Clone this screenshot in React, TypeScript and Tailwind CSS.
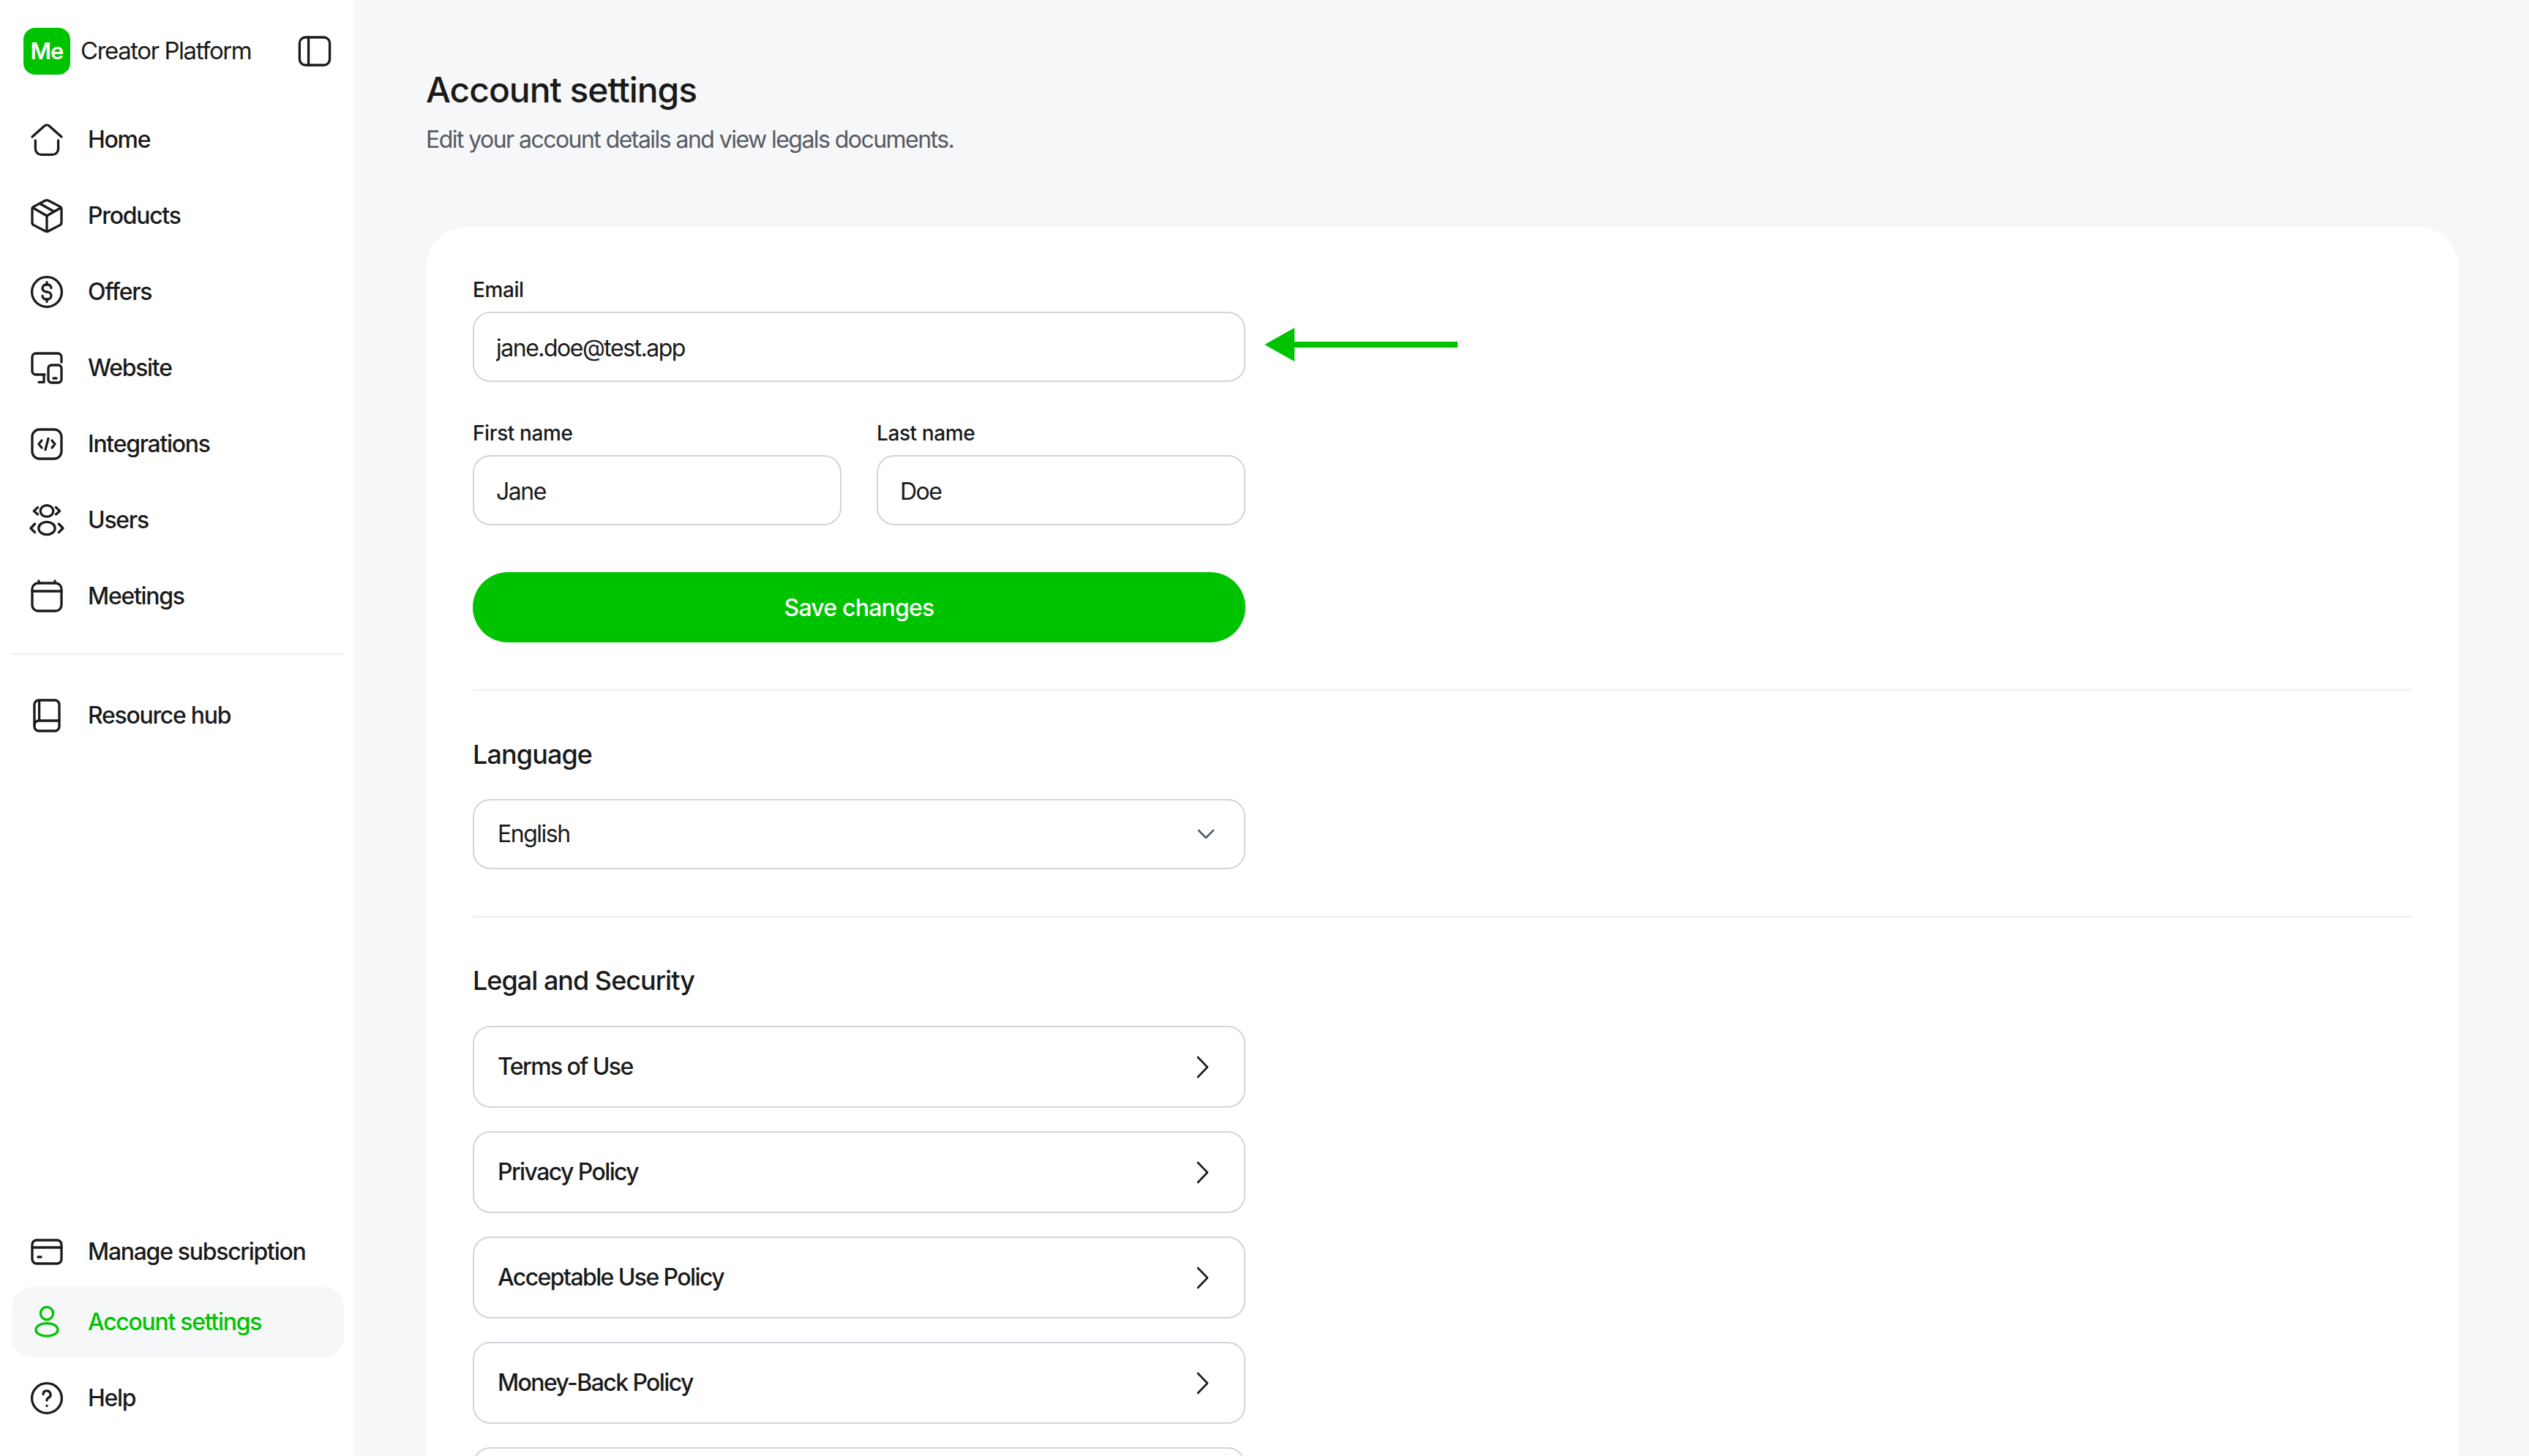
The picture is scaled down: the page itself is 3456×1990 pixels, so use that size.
import type { ReactNode } from "react";

const font = "font-['Inter','Liberation_Sans',sans-serif]";

function Icon({ children, className = "" }: { children: ReactNode; className?: string }) {
  return (
    <svg
      viewBox="0 0 24 24"
      fill="none"
      stroke="currentColor"
      strokeWidth="1.65"
      strokeLinecap="round"
      strokeLinejoin="round"
      className={`w-12 h-12 shrink-0 ${className}`}
    >
      {children}
    </svg>
  );
}

const icons: Record<string, ReactNode> = {
  home: (
    <>
      <path d="M2 10 10.3 2.6a2.5 2.5 0 0 1 3.4 0L22 10" />
      <path d="M4.2 12.5v5.7a4 4 0 0 0 4 4h7.6a4 4 0 0 0 4-4v-5.7" />
    </>
  ),
  products: (
    <>
      <path d="M10.8 1.6 3 5.700a2 2 0 0 0-1 1.800v9a2 2 0 0 0 1 1.800l7.800 4.100a2.500 2.500 0 0 0 2.400 0L21 18.300a2 2 0 0 0 1-1.800v-9a2 2 0 0 0-1-1.800l-7.800-4.100a2.500 2.500 0 0 0-2.400 0z" />
      <path d="M2.500 6.500 12 12l9.500-5.500" />
      <path d="M12 12v10.500" />
      <path d="M7.200 3.600 16.800 9" />
    </>
  ),
  offers: (
    <>
      <circle cx="12" cy="12" r="10.200" />
      <path d="M15 9.300A2.500 2.500 0 0 0 12.500 7h-1A2.500 2.500 0 0 0 9 9.500c0 1.400 1 2.100 2.500 2.500h1c1.500.400 2.500 1.100 2.500 2.500a2.500 2.500 0 0 1-2.500 2.500h-1A2.500 2.500 0 0 1 9 14.700" />
      <path d="M12 5.300V7M12 17v1.700" />
    </>
  ),
  website: (
    <>
      <path d="M10.500 16.500h-6A2.500 2.500 0 0 1 2 14V4.500A2.500 2.500 0 0 1 4.500 2h15A2.500 2.500 0 0 1 22 4.500V8" />
      <path d="M10 16.500v5.200H6.500" />
      <rect x="13" y="10" width="9" height="12" rx="2.200" />
      <path d="M16.500 19h2" />
    </>
  ),
  integrations: (
    <>
      <rect x="2" y="2" width="20" height="20" rx="5" />
      <path d="M8.500 9.500 6.500 12l2 2.500M15.500 9.500l2 2.500-2 2.500M13 8.200l-2 7.600" />
    </>
  ),
  users: (
    <>
      <ellipse cx="12" cy="5.700" rx="4.400" ry="3.900" />
      <ellipse cx="12" cy="17.500" rx="5.600" ry="4.300" />
      <path d="M5.800 3.200 3.200 5.700l2.600 2.300M18.200 3.200l2.600 2.500-2.600 2.300" />
      <path d="M3.800 14.500 1 17.500l2.800 2.800M20.200 14.500l2.800 3-2.800 2.800" />
    </>
  ),
  meetings: (
    <>
      <rect x="2" y="3" width="20" height="19" rx="4" />
      <path d="M2 8.500h20M6.500 1.500v1.500M17.500 1.500v1.500" />
    </>
  ),
  resource: (
    <>
      <rect x="3.500" y="1.500" width="17" height="21" rx="3" />
      <path d="M6.800 1.800v13.700M3.500 18.500a3 3 0 0 1 3-3h14" />
    </>
  ),
  card: (
    <>
      <rect x="2" y="4" width="20" height="16" rx="3" />
      <path d="M2 9h20M6 15.500h2" />
    </>
  ),
  user: (
    <>
      <circle cx="12" cy="6" r="4.300" />
      <ellipse cx="12" cy="17.200" rx="7.500" ry="4.400" />
    </>
  ),
  help: (
    <>
      <circle cx="12" cy="12" r="10.200" />
      <path d="M9.500 9.300a2.500 2.500 0 1 1 3.600 2.400c-.8.400-1.100.9-1.100 1.800" />
      <path d="M12 17.200v.1" />
    </>
  ),
};

function NavItem({ icon, label, active }: { icon: string; label: string; active?: boolean }) {
  return (
    <a
      className={`flex items-center gap-8 h-24 px-6 rounded-[28px] text-[32px] font-medium tracking-[-1.3px] ${
        active ? "bg-[#f6f7f9] text-[#00c300]" : "text-[#1a1a1a]"
      }`}
    >
      <Icon>{icons[icon]}</Icon>
      <span>{label}</span>
    </a>
  );
}

function Sidebar() {
  return (
    <aside className="w-[484px] shrink-0 h-full bg-white flex flex-col pl-4 pr-[14px]">
      {/* Logo row */}
      <div className="flex items-center h-16 mt-[38px] pl-4 pr-4">
        <div className="w-16 h-16 rounded-2xl bg-[#00c300] text-white flex items-center justify-center text-[31px] font-semibold tracking-[-1px]">
          Me
        </div>
        <span className="ml-[14px] text-[33px] tracking-[-1.45px] text-[#1a1a1a]">Creator Platform</span>
        <Icon className="ml-auto text-[#1a1a1a]">
          <rect x="1.700" y="2.500" width="20.600" height="19" rx="4" />
          <path d="M7.800 2.500v19" />
        </Icon>
      </div>

      <nav className="flex flex-col gap-2 mt-[41px]">
        <NavItem icon="home" label="Home" />
        <NavItem icon="products" label="Products" />
        <NavItem icon="offers" label="Offers" />
        <NavItem icon="website" label="Website" />
        <NavItem icon="integrations" label="Integrations" />
        <NavItem icon="users" label="Users" />
        <NavItem icon="meetings" label="Meetings" />
      </nav>

      <hr className="border-t-2 border-[#eeeff1] mt-[30px] mb-[35px]" />
      <NavItem icon="resource" label="Resource hub" />

      <div className="mt-auto mb-[31px] flex flex-col">
        <NavItem icon="card" label="Manage subscription" />
        <NavItem icon="user" label="Account settings" active />
        <div className="h-2" />
        <NavItem icon="help" label="Help" />
      </div>
    </aside>
  );
}

function Field({ label, value, className = "" }: { label: string; value: string; className?: string }) {
  return (
    <label className={`flex flex-col gap-[22px] ${className}`}>
      <span className="text-[28px] leading-[15px] font-medium tracking-[-0.4px] text-[#1a1a1a]">{label}</span>
      <input
        readOnly
        value={value}
        className="h-24 w-full rounded-[24px] border-2 border-[#d1d5db] bg-white px-[30px] pt-0.5 text-[32px] tracking-[-1.5px] text-[#1a1a1a] outline-none"
      />
    </label>
  );
}

function LegalRow({ label }: { label?: string }) {
  return (
    <a className="flex items-center justify-between h-28 shrink-0 rounded-[24px] border-2 border-[#d1d5db] pl-8 pr-[48px] text-[32px] font-medium tracking-[-1.6px] text-[#1a1a1a]">
      <span>{label}</span>
      <svg viewBox="0 0 17 31" fill="none" stroke="currentColor" strokeWidth="2.6" strokeLinecap="round" strokeLinejoin="round" className="w-[17px] h-[31px]">
        <path d="M2 2l13 13.500L2 29" />
      </svg>
    </a>
  );
}

export default function App() {
  return (
    <div className={`flex h-screen overflow-hidden bg-[#f6f7f9] ${font}`}>
      <Sidebar />
      <main className="flex-1 min-w-0 pl-[98px] pr-24 pt-[98px]">
        <h1 className="text-[48px] leading-[50px] font-medium tracking-[-1.05px] text-[#1a1a1a]">Account settings</h1>
        <p className="mt-[23px] text-[32px] leading-[40px] tracking-[-1.55px] text-[#555b63]">
          Edit your account details and view legals documents.
        </p>

        <section className="mt-[99px] bg-white rounded-t-[56px] px-16 pt-[79px] pb-16">
          {/* Account form */}
          <div className="w-[1056px] flex flex-col">
            <div className="relative">
              <Field label="Email" value="jane.doe@test.app" />
              <svg viewBox="0 0 264 46" className="absolute left-[1082px] top-[59px] w-[264px] h-[46px] text-[#00c300]" fill="currentColor">
                <path d="M0 23 41 0v19h223v8H41v19z" />
              </svg>
            </div>
            <div className="grid grid-cols-2 gap-12 mt-[63px]">
              <Field label="First name" value="Jane" />
              <Field label="Last name" value="Doe" />
            </div>
            <button className="mt-16 h-24 rounded-full bg-[#00c300] text-white text-[32px] font-medium tracking-[-0.8px] pt-0.5">
              Save changes
            </button>
          </div>

          <hr className="mt-16 border-t-2 border-[#eeeff1]" />

          {/* Language */}
          <h2 className="mt-[67px] text-[36px] leading-[40px] font-medium tracking-[-0.9px] text-[#1a1a1a]">Language</h2>
          <div className="mt-[41px] w-[1056px] h-24 flex items-center justify-between rounded-[24px] border-2 border-[#d1d5db] pl-8 pr-[40px] text-[32px] tracking-[-1.5px] text-[#1a1a1a]">
            <span>English</span>
            <svg viewBox="0 0 24 14" fill="none" stroke="#555b63" strokeWidth="2.6" strokeLinecap="round" strokeLinejoin="round" className="w-6 h-[14px]">
              <path d="M2 2l10 10L22 2" />
            </svg>
          </div>

          <hr className="mt-16 border-t-2 border-[#eeeff1]" />

          {/* Legal */}
          <h2 className="mt-[66px] text-[36px] leading-[40px] font-medium tracking-[-1px] text-[#1a1a1a]">Legal and Security</h2>
          <div className="mt-[42px] w-[1056px] flex flex-col gap-8">
            <LegalRow label="Terms of Use" />
            <LegalRow label="Privacy Policy" />
            <LegalRow label="Acceptable Use Policy" />
            <LegalRow label="Money-Back Policy" />
            <LegalRow />
          </div>
        </section>
      </main>
    </div>
  );
}
